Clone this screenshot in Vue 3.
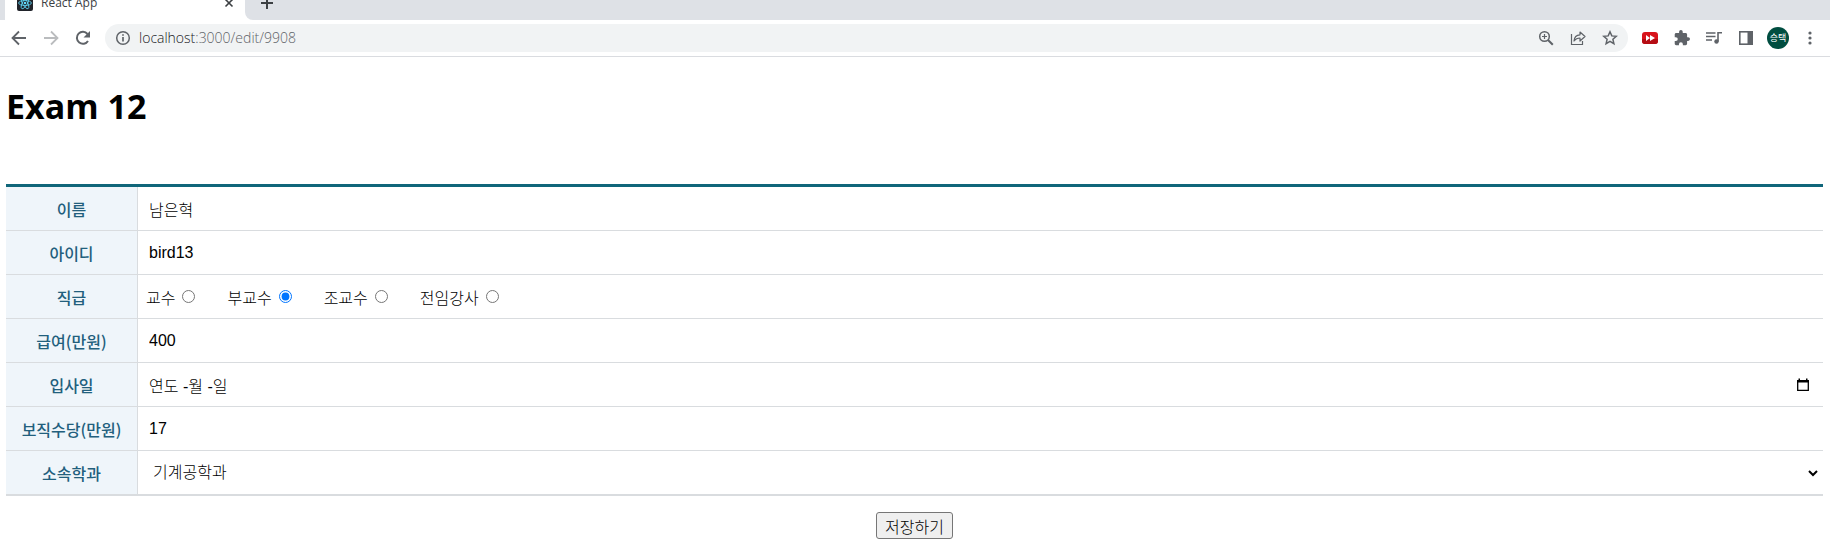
<script setup>
import { ref } from 'vue'

const positions = ['교수', '부교수', '조교수', '전임강사']
const departments = ['기계공학과', '컴퓨터공학과', '전자공학과']
const url = ref('localhost:3000/edit/9908')
const form = ref({
  name: '남은혁',
  userid: 'bird13',
  position: '부교수',
  sal: '400',
  hiredate: '연도 -월 -일',
  comm: '17',
  dept: '기계공학과'
})
</script>

<template>
  <div class="window">
    <header>
      <div class="tabs">
        <div class="tab">
          <svg class="favicon" width="16" height="16" viewBox="0 0 16 16">
            <rect width="16" height="16" rx="2" fill="#20232a" />
            <g fill="none" stroke="#61dafb" stroke-width=".8">
              <ellipse cx="8" cy="8" rx="6.4" ry="2.5" />
              <ellipse cx="8" cy="8" rx="6.4" ry="2.5" transform="rotate(60 8 8)" />
              <ellipse cx="8" cy="8" rx="6.4" ry="2.5" transform="rotate(120 8 8)" />
            </g>
            <circle cx="8" cy="8" r="1.3" fill="#61dafb" />
          </svg>
          <span class="title">React App</span>
          <button class="icon" aria-label="Close tab">
            <svg width="10" height="10" viewBox="0 0 10 10"><path d="M1.5 1.5l7 7m0-7l-7 7" stroke="#3c4043" stroke-width="1.6" /></svg>
          </button>
        </div>
        <div class="strip">
          <button class="icon" aria-label="New tab">
            <svg width="14" height="14" viewBox="0 0 14 14"><path d="M7 1v12M1 7h12" stroke="#3c4043" stroke-width="2" /></svg>
          </button>
        </div>
      </div>
      <nav class="toolbar">
        <button class="icon" aria-label="Back">
          <svg width="16" height="16" viewBox="0 0 16 16" fill="none" stroke="#5f6368" stroke-width="1.8"><path d="M15 8H2M8 1.5L1.5 8 8 14.500" /></svg>
        </button>
        <button class="icon" aria-label="Forward">
          <svg width="16" height="16" viewBox="0 0 16 16" fill="none" stroke="#babcbe" stroke-width="1.8"><path d="M1 8h13M8 1.500L14.500 8 8 14.500" /></svg>
        </button>
        <button class="icon" aria-label="Reload">
          <svg width="16" height="16" viewBox="0 0 16 16"><path d="M13 11A6 6 0 1 1 12.500 4" fill="none" stroke="#5f6368" stroke-width="2" /><path d="M15 1v6.500H8.500z" fill="#5f6368" /></svg>
        </button>
        <div class="omnibox">
          <svg width="16" height="16" viewBox="0 0 16 16"><circle cx="8" cy="8" r="6.300" fill="none" stroke="#5f6368" stroke-width="1.500" /><path d="M8 7v4.500M8 4.200v1.600" stroke="#5f6368" stroke-width="1.700" /></svg>
          <div class="url"><span>localhost</span>{{ url.slice(9) }}</div>
          <button class="icon" aria-label="Zoom">
            <svg width="16" height="16" viewBox="0 0 16 16" fill="none" stroke="#5f6368"><circle cx="6.500" cy="6.500" r="4.800" stroke-width="1.500" /><path d="M10 10l4.800 4.800" stroke-width="2" /><path d="M6.500 4v5M4 6.500h5" stroke-width="1.200" /></svg>
          </button>
          <button class="icon" aria-label="Share">
            <svg width="16" height="16" viewBox="0 0 16 16" fill="none" stroke="#5f6368" stroke-width="1.200"><path d="M1.500 4v10.500h11V11" /><path d="M4 11c.3-4 2.500-6 6-6.200V2l5 4.500-5 4.500V8C7.500 8 5.500 9 4 11z" stroke-linejoin="round" /></svg>
          </button>
          <button class="icon" aria-label="Bookmark">
            <svg width="16" height="16" viewBox="0 0 16 16" fill="none" stroke="#5f6368" stroke-width="1.500"><path d="M8 1.800l1.800 4.100 4.500.4-3.400 3 1 4.400L8 11.400l-3.900 2.300 1-4.400-3.400-3 4.500-.4z" /></svg>
          </button>
        </div>
        <button class="icon" aria-label="Video speed">
          <svg width="16" height="16" viewBox="0 0 16 16"><rect y="2" width="16" height="12" rx="3" fill="#d8141c" /><path d="M0 9h16v2a3 3 0 0 1-3 3H3a3 3 0 0 1-3-3z" fill="#b50d14" /><path d="M4 5l4 3V5l5 3-5 3V8l-4 3z" fill="#fff" /></svg>
        </button>
        <button class="icon" aria-label="Extensions">
          <svg width="16" height="16" viewBox="1 1 22 22"><path d="M20.500 11H19V7c0-1.100-.9-2-2-2h-4V3.500a2.500 2.500 0 0 0-5 0V5H4c-1.100 0-2 .9-2 2v3.800h1.500a2.700 2.700 0 0 1 0 5.400H2V20c0 1.100.9 2 2 2h3.800v-1.500a2.700 2.700 0 0 1 5.400 0V22H17c1.100 0 2-.9 2-2v-4h1.500a2.500 2.500 0 0 0 0-5z" fill="#5f6368" /></svg>
        </button>
        <button class="icon" aria-label="Media">
          <svg width="16" height="16" viewBox="0 0 16 16" fill="none" stroke="#5f6368" stroke-width="1.600"><path d="M0 3h9.500M0 6.500h9.500M0 10h6M12 11.500V2.800h4" /><circle cx="10.500" cy="11.500" r="2.200" fill="#5f6368" stroke="none" /></svg>
        </button>
        <button class="icon" aria-label="Side panel">
          <svg width="16" height="16" viewBox="0 0 16 16"><rect x="1.800" y="1.800" width="12.400" height="12.400" fill="none" stroke="#5f6368" stroke-width="1.600" /><path d="M9.500 1h5.500v14H9.500z" fill="#5f6368" /></svg>
        </button>
        <button class="avatar">승택</button>
        <button class="icon" aria-label="Menu">
          <svg width="16" height="16" viewBox="0 0 16 16" fill="#5f6368"><circle cx="8" cy="3" r="1.600" /><circle cx="8" cy="8" r="1.600" /><circle cx="8" cy="13" r="1.600" /></svg>
        </button>
      </nav>
    </header>

    <main>
      <h1>Exam 12</h1>
      <form @submit.prevent>
        <table>
          <tbody>
            <tr>
              <th scope="row"><label for="name">이름</label></th>
              <td><input id="name" v-model="form.name" class="field" type="text" /></td>
            </tr>
            <tr>
              <th scope="row"><label for="userid">아이디</label></th>
              <td><input id="userid" v-model="form.userid" class="field" type="text" /></td>
            </tr>
            <tr>
              <th scope="row">직급</th>
              <td>
                <div class="radios">
                  <label v-for="p in positions" :key="p">
                    {{ p }}<input v-model="form.position" type="radio" name="position" :value="p" />
                  </label>
                </div>
              </td>
            </tr>
            <tr>
              <th scope="row"><label for="sal">급여(만원)</label></th>
              <td><input id="sal" v-model="form.sal" class="field" type="text" /></td>
            </tr>
            <tr>
              <th scope="row"><label for="hiredate">입사일</label></th>
              <td>
                <div class="date">
                  <input id="hiredate" v-model="form.hiredate" class="field" type="text" />
                  <button type="button" class="icon" aria-label="날짜 선택">
                    <svg width="14" height="14" viewBox="0 0 14 14"><path d="M1.700 3v9.300h10.600V3" fill="none" stroke="#000" stroke-width="1.300" /><path d="M1 2h1.500V.5H4V2h6V.5h1.500V2H13v2.500H1z" /></svg>
                  </button>
                </div>
              </td>
            </tr>
            <tr>
              <th scope="row"><label for="comm">보직수당(만원)</label></th>
              <td><input id="comm" v-model="form.comm" class="field" type="text" /></td>
            </tr>
            <tr>
              <th scope="row"><label for="dept">소속학과</label></th>
              <td>
                <select id="dept" v-model="form.dept">
                  <option v-for="d in departments" :key="d">{{ d }}</option>
                </select>
              </td>
            </tr>
          </tbody>
        </table>
        <div class="actions"><button type="submit" class="save">저장하기</button></div>
      </form>
    </main>
  </div>
</template>

<style>
body {
  margin: 0;
  background: #fff;
}
</style>

<style scoped>
.window {
  font-family: "Noto Sans CJK KR", sans-serif;
  font-size: 16px;
  line-height: 24px;
  color: #000;
}
.icon {
  display: flex;
  padding: 0;
  border: 0;
  background: none;
}
svg {
  display: block;
  flex: none;
}
.tabs {
  display: flex;
  height: 20px;
  padding-left: 5px;
  background: linear-gradient(to right, #dee1e6 5px, #fff 5px);
}
.tab {
  box-sizing: border-box;
  width: 240px;
  display: flex;
  align-items: center;
  padding: 0 11px 0 12px;
  height: 6px;
  color: #3c4043;
  font-family: "Open Sans", sans-serif;
  font-size: 12px;
}
.title {
  flex: 1;
  margin-left: 8px;
}
.strip {
  flex: 1;
  height: 20px;
  padding: 0 15px;
  display: flex;
  align-items: flex-start;
  background: #dee1e6;
  border-bottom-left-radius: 8px;
}
.strip .icon {
  margin-top: -4px;
}
.toolbar {
  display: flex;
  align-items: center;
  gap: 16px;
  height: 36px;
  padding: 0 12px 0 11px;
  border-bottom: 1px solid #dadce0;
}
.omnibox {
  flex: 1;
  display: flex;
  align-items: center;
  gap: 16px;
  height: 28px;
  margin: 0 -2px;
  padding: 0 10px;
  border-radius: 14px;
  background: #f1f3f4;
}
.url {
  flex: 1;
  margin-left: -8px;
  color: #5f6368;
  font-family: "Open Sans", sans-serif;
  font-size: 14px;
  font-weight: 300;
}
.url span {
  color: #202124;
}
.avatar {
  width: 22px;
  height: 22px;
  margin: 0 -3px;
  padding: 0;
  border: 0;
  border-radius: 50%;
  background: #004d40;
  color: #fff;
  font-family: "Noto Sans CJK KR", sans-serif;
  font-size: 9px;
  line-height: 22px;
}
main {
  padding: 24px 7px 8px 6px;
}
h1 {
  margin: 0 0 53px;
  font-family: "Open Sans", sans-serif;
  font-size: 34px;
  font-weight: 700;
  line-height: 50px;
}
table {
  width: 100%;
  border-spacing: 0;
  border-top: 3px solid #10667a;
  border-bottom: 2px solid #d9dcdf;
}
th,
td {
  box-sizing: border-box;
  height: 44px;
  padding: 0;
  border-bottom: 1px solid #d9dcdf;
}
td {
  padding-right: 2px;
  font-weight: 300;
}
tr:last-child th,
tr:last-child td {
  height: 43px;
  border-bottom: 0;
}
th {
  width: 132px;
  border-right: 1px solid #d9dcdf;
  background: #eff5fa;
  color: #225f7d;
  font-weight: 500;
}
.field,
select {
  display: block;
  box-sizing: border-box;
  width: 100%;
  height: 40px;
  margin: 0;
  padding: 0 11px;
  border: 0;
  background: transparent;
  color: #000;
  font-family: "Liberation Sans", "Noto Sans CJK KR", sans-serif;
  font-size: 16px;
  font-weight: 300;
}
.radios {
  display: flex;
  gap: 32px;
  padding-left: 8px;
}
.radios label {
  display: flex;
  align-items: center;
  gap: 7px;
}
.radios input {
  width: 13px;
  height: 13px;
  margin: 0;
}
.date {
  display: flex;
  align-items: center;
  padding-right: 11px;
}
.actions {
  display: flex;
  justify-content: center;
  padding-top: 16px;
}
.save {
  height: 27px;
  padding: 0 8px;
  border: 1px solid #767676;
  border-radius: 3px;
  background: #efefef;
  color: #000;
  font-family: "Noto Sans CJK KR", sans-serif;
  font-size: 16px;
  font-weight: 300;
  line-height: 24px;
}
</style>
